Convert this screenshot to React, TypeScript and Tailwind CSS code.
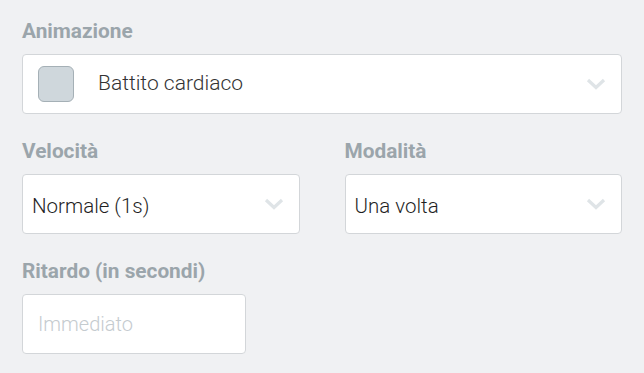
import type { ReactNode } from "react";

function Chevron() {
  return (
    <svg width="20" height="12" viewBox="0 0 20 12" className="shrink-0">
      <path
        d="M2 2 L10 9.5 L18 2"
        fill="none"
        stroke="#dfe4e7"
        strokeWidth="3.2"
      />
    </svg>
  );
}

function Label({ children }: { children: ReactNode }) {
  return (
    <div className="mb-[12px] text-[20.8px] font-bold leading-[22px] text-[#9ba5ab]">
      {children}
    </div>
  );
}

function Select({ value }: { value: string }) {
  return (
    <div className="flex h-[60px] items-center justify-between rounded-[4px] border border-[#d3d6d9] bg-white pl-[9px] pr-[15px]">
      <span className="pt-[4px] text-[20.5px] font-light text-[#1f1f1f]">
        {value}
      </span>
      <Chevron />
    </div>
  );
}

export default function App() {
  return (
    <div
      className="min-h-screen bg-[#f0f1f3] px-[22px] pt-[20px]"
      style={{ fontFamily: "Roboto, 'Liberation Sans', sans-serif" }}
    >
      <Label>Animazione</Label>
      <div className="flex h-[60px] w-[600px] items-center justify-between rounded-[4px] border border-[#d3d6d9] bg-white pl-[15px] pr-[15px]">
        <div className="flex items-center">
          <div className="h-[36px] w-[36px] rounded-[6px] border border-[#a5b0b6] bg-[#cfd7dc]" />
          <span className="ml-[24px] text-[21px] font-light text-[#333]">
            Battito cardiaco
          </span>
        </div>
        <Chevron />
      </div>

      <div className="mt-[26px] grid w-[600px] grid-cols-2 gap-[45px]">
        <div>
          <Label>Velocità</Label>
          <Select value="Normale (1s)" />
        </div>
        <div>
          <Label>Modalità</Label>
          <Select value="Una volta" />
        </div>
      </div>

      <div className="mt-[26px]">
        <Label>Ritardo (in secondi)</Label>
        <input
          placeholder="Immediato"
          className="h-[60px] w-[224px] rounded-[4px] border border-[#d3d6d9] bg-white px-[15px] text-[20px] font-light text-[#222] outline-none placeholder:text-[#c5cbcf]"
        />
      </div>
    </div>
  );
}
